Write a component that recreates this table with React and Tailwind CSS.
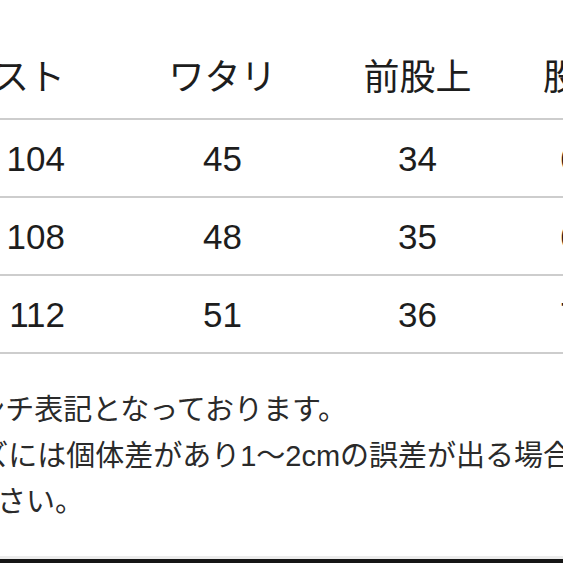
import React from "react";

const jp = { fontFamily: '"Liberation Sans", "Noto Sans CJK JP", sans-serif' };

function Row({ cells, header }) {
  return (
    <div
      className={`flex ml-[-100px] leading-none whitespace-nowrap text-[#1d1d1d] ${
        header ? "h-[118px] items-end pb-[22px] text-[36px]" : "h-[76px] items-center text-[35px]"
      }`}
    >
      <div className="w-[165px] shrink-0 flex justify-end">
        <span>{cells[0]}</span>
      </div>
      <div className="w-[195px] shrink-0 ml-[60px] flex justify-center">
        <span>{cells[1]}</span>
      </div>
      <div className="w-[195px] shrink-0 flex justify-center">
        <span>{cells[2]}</span>
      </div>
      <div className={`shrink-0 ${header ? "pl-[28px]" : "pl-[45px]"}`}>
        <span>{cells[3]}</span>
      </div>
    </div>
  );
}

function Line() {
  return <div className="h-[2px] bg-[#cdcdcd] shrink-0" />;
}

export default function App() {
  const rows = [
    ["104", "45", "34", "65"],
    ["108", "48", "35", "67"],
    ["112", "51", "36", "70"],
  ];

  return (
    <div className="w-[563px] h-[563px] overflow-hidden bg-white flex flex-col" style={jp}>
      <Row header cells={["ウエスト", "ワタリ", "前股上", "股下"]} />
      <Line />
      {rows.map((r, i) => (
        <React.Fragment key={i}>
          <Row cells={r} />
          <Line />
        </React.Fragment>
      ))}

      <div className="mt-[33px] text-[29px] leading-[46px] text-[#2a2a2a] whitespace-nowrap">
        <p className="ml-[-197px]">※サイズはセンチ表記となっております。</p>
        <p className="ml-[-107px]">※サイズには個体差があり1〜2cmの誤差が出る場合がございます。</p>
        <p className="ml-[-206px]">予めご了承ください。</p>
      </div>

      <div className="flex-1" />
      <div className="h-[3px] bg-[#ececec] shrink-0" />
      <div className="h-[4px] bg-[#161616] shrink-0" />
    </div>
  );
}
